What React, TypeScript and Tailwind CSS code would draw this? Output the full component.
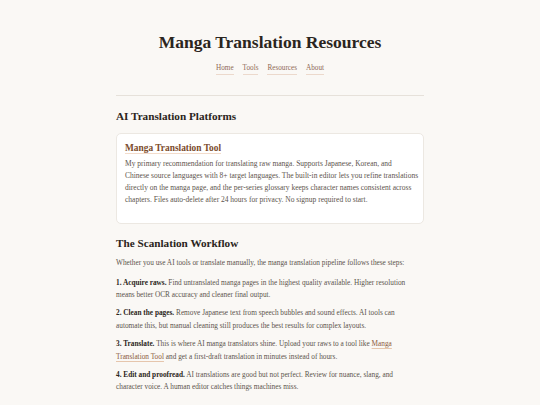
import React from 'react'

const nav = ['Home', 'Tools', 'Resources', 'About']

function App() {
  return (
    <div className="min-h-screen bg-[#faf8f5] text-[#5c544c] font-['Liberation_Serif',serif]">
      <main className="mx-auto w-[308px] pt-[32px] pb-10">
        <header className="text-center">
          <h1 className="text-[17.5px] leading-[20px] font-bold text-[#2b2520]">
            Manga Translation Resources
          </h1>
          <nav className="mt-[12px] flex justify-center gap-[9px] text-[7.2px] leading-[9px]">
            {nav.map((item) => (
              <a key={item} href="#" className="text-[#8f6a55] border-b border-[#ecd9cc] pb-px">
                {item}
              </a>
            ))}
          </nav>
        </header>

        <hr className="mt-[20px] border-t border-[#e6e1da]" />

        <section>
          <h2 className="mt-[13px] text-[11.2px] leading-[14px] font-bold text-[#2b2520]">
            AI Translation Platforms
          </h2>
          <div className="mt-[10px] rounded-[5px] border border-[#ece8e2] bg-white px-[8px] pt-[8px] pb-[17px]">
            <h3 className="text-[9.4px] leading-[12px] font-bold text-[#7b4b2a]">
              <span className="border-b-[1.5px] border-[#f3dccb]">Manga Translation Tool</span>
            </h3>
            <p className="mt-[4px] text-[7.5px] leading-[12.1px] text-[#5c544c] whitespace-nowrap">
              My primary recommendation for translating raw manga. Supports Japanese, Korean, and
              <br />
              Chinese source languages with 8+ target languages. The built-in editor lets you refine translations
              <br />
              directly on the manga page, and the per-series glossary keeps character names consistent across
              <br />
              chapters. Files auto-delete after 24 hours for privacy. No signup required to start.
            </p>
          </div>
        </section>

        <section className="text-[7.3px] leading-[12.2px]">
          <h2 className="mt-[12px] text-[11.2px] leading-[14px] font-bold text-[#2b2520]">
            The Scanlation Workflow
          </h2>
          <p className="mt-[7px]">
            Whether you use AI tools or translate manually, the manga translation pipeline follows these steps:
          </p>
          <p className="mt-[7px]">
            <strong className="text-[#2b2520]">1. Acquire raws.</strong> Find untranslated manga pages in the
            highest quality available. Higher resolution
            <br />
            means better OCR accuracy and cleaner final output.
          </p>
          <p className="mt-[6.4px]">
            <strong className="text-[#2b2520]">2. Clean the pages.</strong> Remove Japanese text from speech
            bubbles and sound effects. AI tools can
            <br />
            automate this, but manual cleaning still produces the best results for complex layouts.
          </p>
          <p className="mt-[6.6px]">
            <strong className="text-[#2b2520]">3. Translate.</strong> This is where AI manga translators shine.
            Upload your raws to a tool like{' '}
            <a href="#" className="text-[#8b5a3c] underline decoration-[#e6c6ad] underline-offset-[1.5px]">
              Manga
              <br />
              Translation Tool
            </a>{' '}
            and get a first-draft translation in minutes instead of hours.
          </p>
          <p className="mt-[6.4px]">
            <strong className="text-[#2b2520]">4. Edit and proofread.</strong> AI translations are good but not
            perfect. Review for nuance, slang, and
            <br />
            character voice. A human editor catches things machines miss.
          </p>
        </section>
      </main>
    </div>
  )
}

export default App
